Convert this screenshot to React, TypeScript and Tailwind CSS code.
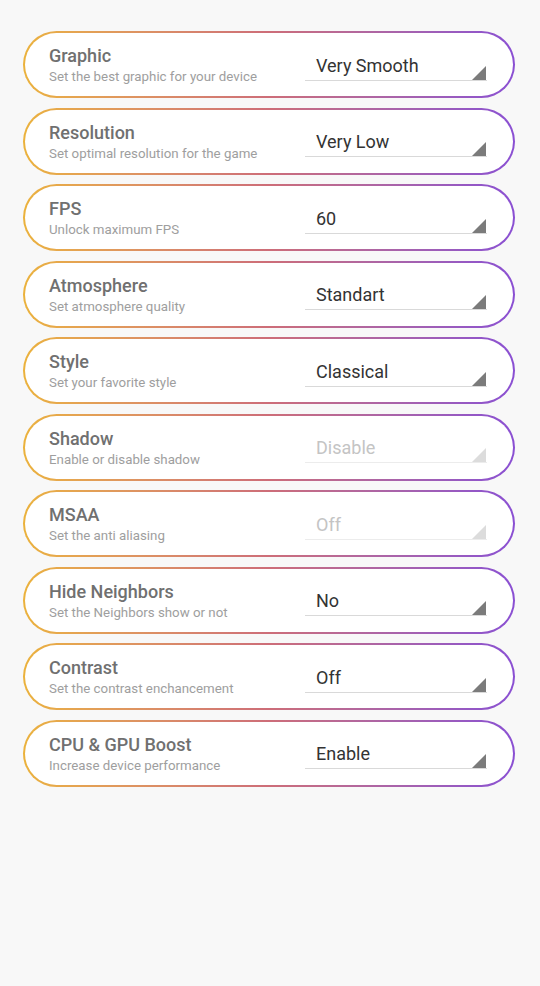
const settings = [
  { title: "Graphic", desc: "Set the best graphic for your device", value: "Very Smooth", enabled: true },
  { title: "Resolution", desc: "Set optimal resolution for the game", value: "Very Low", enabled: true },
  { title: "FPS", desc: "Unlock maximum FPS", value: "60", enabled: true },
  { title: "Atmosphere", desc: "Set atmosphere quality", value: "Standart", enabled: true },
  { title: "Style", desc: "Set your favorite style", value: "Classical", enabled: true },
  { title: "Shadow", desc: "Enable or disable shadow", value: "Disable", enabled: false },
  { title: "MSAA", desc: "Set the anti aliasing", value: "Off", enabled: false },
  { title: "Hide Neighbors", desc: "Set the Neighbors show or not", value: "No", enabled: true },
  { title: "Contrast", desc: "Set the contrast enchancement", value: "Off", enabled: true },
  { title: "CPU & GPU Boost", desc: "Increase device performance", value: "Enable", enabled: true },
];

function Spinner({ value, enabled }: { value: string; enabled: boolean }) {
  return (
    <div className="relative w-[182px] mt-[5px] flex flex-col">
      <div
        className={
          "pl-[11px] text-[18px] leading-[24px] " +
          (enabled ? "text-[#333333]" : "text-[#c4c4c4]")
        }
      >
        {value}
      </div>
      <div className={"mt-[2px] h-px " + (enabled ? "bg-[#d9d9d9]" : "bg-[#ececec]")} />
      <svg className="absolute right-[1px] bottom-[1px]" width="14" height="14" viewBox="0 0 14 14">
        <polygon points="14,0 14,14 0,14" fill={enabled ? "#7b7b7b" : "#dcdcdc"} />
      </svg>
    </div>
  );
}

export default function App() {
  return (
    <div className="min-h-[986px] w-[540px] bg-[#f8f8f8] pt-[31px] font-['Roboto',sans-serif]">
      <div className="flex flex-col gap-[9.5px] pl-[23px] pr-[25px]">
        {settings.map((s) => (
          <div
            key={s.title}
            className="h-[67px] rounded-full p-[2px] bg-gradient-to-r from-[#ebb23c] via-[#cd6d78] to-[#8a4fd3]"
          >
            <div className="h-full rounded-full bg-white flex items-center justify-between pl-[24px] pr-[26px]">
              <div className="flex flex-col mt-[2px]">
                <span className="text-[18px] leading-[20px] font-medium text-[#707070]">{s.title}</span>
                <span className="mt-[3px] text-[13.3px] leading-[16px] text-[#9e9e9e]">{s.desc}</span>
              </div>
              <Spinner value={s.value} enabled={s.enabled} />
            </div>
          </div>
        ))}
      </div>
    </div>
  );
}
